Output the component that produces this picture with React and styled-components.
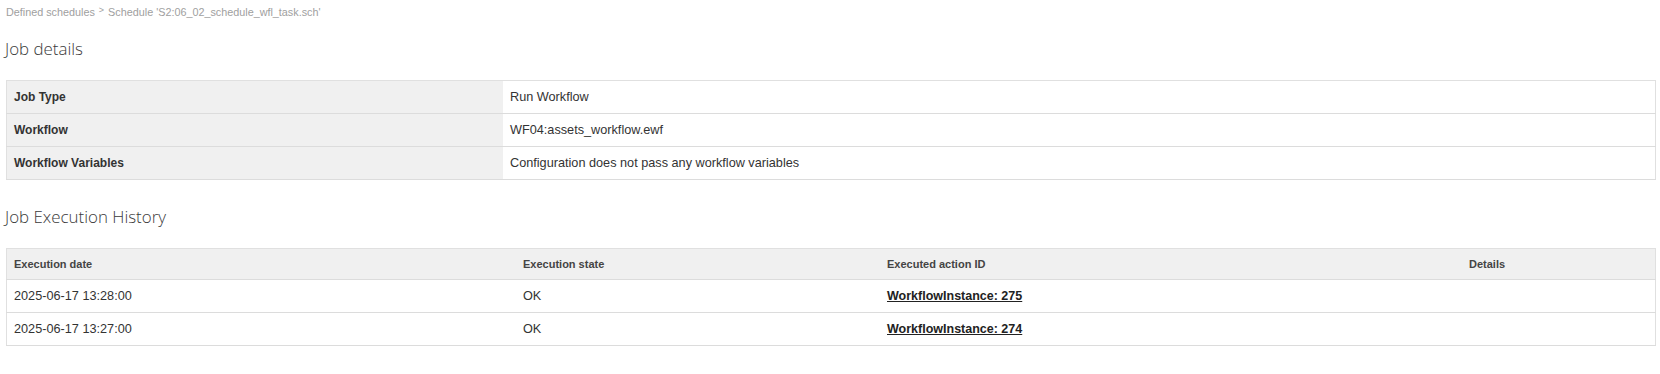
import React from "react";
import styled, { createGlobalStyle } from "styled-components";

const GlobalStyle = createGlobalStyle`
  body {
    margin: 0;
    background: #ffffff;
    font-family: "Liberation Sans", Arial, sans-serif;
    color: #333333;
  }
`;

const Page = styled.div`
  padding: 5px 5px 20px 6px;
`;

const Breadcrumb = styled.div`
  display: flex;
  align-items: center;
  gap: 4px;
  font-size: 10.8px;
  line-height: 14px;
  color: #a0a0a0;
  a {
    color: #a0a0a0;
    text-decoration: none;
  }
  .sep {
    font-size: 9px;
    position: relative;
    top: -2px;
  }
`;

const Heading = styled.h2`
  margin: ${(p) => p.$top}px 0 0 -1px;
  font-family: "Open Sans", sans-serif;
  font-weight: 300;
  font-size: 16.9px;
  line-height: 22px;
  color: #3a3a3a;
`;

const Table = styled.table`
  width: 1650px;
  margin-top: ${(p) => p.$top}px;
  border-collapse: collapse;
  border: 1px solid #e0e0e0;
  font-size: 12.7px;
  td,
  th {
    border-bottom: 1px solid #dcdcdc;
    padding: 0 7px;
    text-align: left;
    vertical-align: middle;
  }
`;

const DetailRow = styled.tr`
  height: 33px;
`;

const Label = styled.td`
  width: 482px;
  background: #f0f0f0;
  font-weight: bold;
  font-size: 12px;
  color: #333333;
`;

const Value = styled.td`
  color: #333333;
`;

const HeadRow = styled.tr`
  height: 31px;
  background: #f0f0f0;
  th {
    font-size: 11px;
    font-weight: bold;
    color: #444444;
  }
`;

const Th = styled.th`
  width: ${(p) => p.$w}px;
`;

const HistRow = styled.tr`
  height: 33px;
`;

const ActionLink = styled.a`
  font-weight: bold;
  font-size: 12.5px;
  color: #222222;
  text-decoration: underline;
`;

const details = [
  ["Job Type", "Run Workflow"],
  ["Workflow", "WF04:assets_workflow.ewf"],
  ["Workflow Variables", "Configuration does not pass any workflow variables"],
];

const history = [
  ["2025-06-17 13:28:00", "OK", "WorkflowInstance: 275"],
  ["2025-06-17 13:27:00", "OK", "WorkflowInstance: 274"],
];

export default function App() {
  return (
    <>
      <GlobalStyle />
      <Page>
        <Breadcrumb>
          <a href="#">Defined schedules</a>
          <span className="sep">&gt;</span>
          <span>Schedule 'S2:06_02_schedule_wfl_task.sch'</span>
        </Breadcrumb>

        <Heading $top={19}>Job details</Heading>
        <Table $top={20}>
          <tbody>
            {details.map(([k, v]) => (
              <DetailRow key={k}>
                <Label>{k}</Label>
                <Value>{v}</Value>
              </DetailRow>
            ))}
          </tbody>
        </Table>

        <Heading $top={26}>Job Execution History</Heading>
        <Table $top={20}>
          <thead>
            <HeadRow>
              <Th $w={495}>Execution date</Th>
              <Th $w={350}>Execution state</Th>
              <Th $w={568}>Executed action ID</Th>
              <Th>Details</Th>
            </HeadRow>
          </thead>
          <tbody>
            {history.map(([date, state, id]) => (
              <HistRow key={id}>
                <td>{date}</td>
                <td>{state}</td>
                <td>
                  <ActionLink href="#">{id}</ActionLink>
                </td>
                <td></td>
              </HistRow>
            ))}
          </tbody>
        </Table>
      </Page>
    </>
  );
}
